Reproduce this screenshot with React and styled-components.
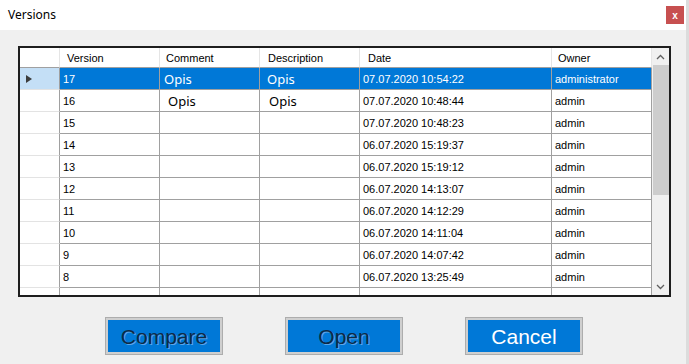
import React from "react"
import styled, { createGlobalStyle, css } from "styled-components"

const GlobalStyle = createGlobalStyle`
    html, body {
        margin: 0;
        padding: 0;
        background: #e6e6e6;
    }
    * {
        box-sizing: border-box;
    }
`

const Window = styled.div`
    width: 689px;
    height: 364px;
    display: flex;
    flex-direction: column;
    background: #f0f0f0;
    border-right: 3px solid #dcdcdc;
    overflow: hidden;
`

const TitleBar = styled.div`
    height: 30px;
    flex: none;
    display: flex;
    align-items: flex-start;
    justify-content: space-between;
    background: #fff;
    padding: 0 2px 0 8px;
`

const Title = styled.span`
    margin-top: 6px;
    font-family: "Noto Sans", "Open Sans", sans-serif;
    font-size: 12px;
    color: #000;
`

const CloseButton = styled.div`
    width: 18px;
    height: 18px;
    margin-top: 6px;
    display: flex;
    align-items: center;
    justify-content: center;
    background: #c75050;
    color: #fff;
    font-family: "Liberation Sans", Arial, sans-serif;
    font-size: 10px;
    font-weight: bold;
`

const Body = styled.div`
    flex: 1;
    display: flex;
    flex-direction: column;
    padding: 16px 0 0 18px;
`

const GridFrame = styled.div`
    width: 653px;
    height: 251px;
    display: flex;
    border: 2px solid #1e1e1e;
    background: #fff;
`

const Viewport = styled.div`
    flex: 1;
    overflow: hidden;
    display: grid;
    grid-template-columns: 40px 100px 100px 100px 192px 100px;
    grid-auto-rows: 22px;
    grid-template-rows: 20px;
    align-content: start;
    font-family: "Liberation Sans", Arial, sans-serif;
    font-size: 11px;
    color: #000;
`

const HeaderCell = styled.div`
    display: flex;
    align-items: center;
    padding-left: ${p => p.$pad || 7}px;
    border-right: 1px solid #e5e5e5;
    border-bottom: 1px solid #a0a0a0;
    background: #fff;
    white-space: nowrap;
`

const RowHeader = styled.div`
    display: flex;
    align-items: center;
    padding-left: 6px;
    border-right: 1px solid #a0a0a0;
    border-bottom: 1px solid #e3e3e3;
    background: ${p => (p.$current ? "#c4dff6" : "#fff")};
`

const Pointer = styled.span`
    width: 0;
    height: 0;
    border-top: 4.5px solid transparent;
    border-bottom: 4.5px solid transparent;
    border-left: 6px solid #3c3c3c;
`

const Cell = styled.div`
    display: flex;
    align-items: center;
    padding-left: ${p => p.$pad || 3}px;
    border-right: 1px solid #a0a0a0;
    border-bottom: 1px solid #a0a0a0;
    white-space: nowrap;
    overflow: hidden;
    ${p =>
        p.$selected &&
        css`
            background: #0078d7;
            color: #fff;
        `}
    ${p =>
        p.$large &&
        css`
            font-family: "Noto Sans", "Open Sans", sans-serif;
            font-size: 13px;
        `}
`

const ScrollBar = styled.div`
    width: 17px;
    flex: none;
    display: flex;
    flex-direction: column;
    background: #f0f0f0;
`

const ArrowBox = styled.div`
    height: 17px;
    flex: none;
    display: flex;
    align-items: center;
    justify-content: center;
`

const Track = styled.div`
    flex: 1;
    padding: 0 0 0 1px;
`

const Thumb = styled.div`
    height: 130px;
    background: #cdcdcd;
`

const ButtonBar = styled.div`
    display: flex;
    gap: 62px;
    margin-top: 20px;
    padding-left: 87px;
`

const DialogButton = styled.button`
    width: 118px;
    height: 38px;
    padding: 0;
    border: 1px solid #adadad;
    box-shadow: inset 0 0 0 2px #cfcfcf;
    background: #0078d7;
    font-family: "Liberation Sans", Arial, sans-serif;
    font-size: 21px;
    line-height: 1;
    cursor: pointer;
    color: ${p => (p.$light ? "#fff" : "#0d2a47")};
    text-shadow: ${p =>
        p.$light ? "none" : "1px 1px 0 rgba(110, 175, 235, 0.85)"};
`

const columns = [
    { title: "Version", pad: 7 },
    { title: "Comment", pad: 6 },
    { title: "Description", pad: 8 },
    { title: "Date", pad: 8 },
    { title: "Owner", pad: 6 },
]

const versions = [
    { version: 17, comment: "Opis", description: "Opis", date: "07.07.2020 10:54:22", owner: "administrator" },
    { version: 16, comment: "Opis", description: "Opis", date: "07.07.2020 10:48:44", owner: "admin" },
    { version: 15, date: "07.07.2020 10:48:23", owner: "admin" },
    { version: 14, date: "06.07.2020 15:19:37", owner: "admin" },
    { version: 13, date: "06.07.2020 15:19:12", owner: "admin" },
    { version: 12, date: "06.07.2020 14:13:07", owner: "admin" },
    { version: 11, date: "06.07.2020 14:12:29", owner: "admin" },
    { version: 10, date: "06.07.2020 14:11:04", owner: "admin" },
    { version: 9, date: "06.07.2020 14:07:42", owner: "admin" },
    { version: 8, date: "06.07.2020 13:25:49", owner: "admin" },
    { version: 7, comment: "asdf", description: "fdsa", date: "06.07.2020 13:08:09", owner: "admin", plain: true },
]

const Chevron = ({ up }) => (
    <svg width="9" height="6" viewBox="0 0 9 6">
        <path
            d={up ? "M1 5 L4.5 1.5 L8 5" : "M1 1 L4.5 4.5 L8 1"}
            fill="none"
            stroke="#606060"
            strokeWidth="1.3"
        />
    </svg>
)

const VersionRow = ({ row, index }) => {
    const selected = index === 0
    const large = !row.plain
    return (
        <>
            <RowHeader $current={selected}>{selected && <Pointer />}</RowHeader>
            <Cell $selected={selected}>{row.version}</Cell>
            <Cell $selected={selected} $large={large && row.comment} $pad={selected ? 4 : row.comment ? 8 : 3}>
                {row.comment}
            </Cell>
            <Cell $selected={selected} $large={large && row.description} $pad={selected ? 7 : row.description ? 9 : 3}>
                {row.description}
            </Cell>
            <Cell $selected={selected}>{row.date}</Cell>
            <Cell $selected={selected}>{row.owner}</Cell>
        </>
    )
}

const App = () => (
    <>
        <GlobalStyle />
        <Window>
            <TitleBar>
                <Title>Versions</Title>
                <CloseButton>x</CloseButton>
            </TitleBar>
            <Body>
                <GridFrame>
                    <Viewport>
                        <HeaderCell />
                        {columns.map(col => (
                            <HeaderCell key={col.title} $pad={col.pad}>
                                {col.title}
                            </HeaderCell>
                        ))}
                        {versions.map((row, i) => (
                            <VersionRow key={row.version} row={row} index={i} />
                        ))}
                    </Viewport>
                    <ScrollBar>
                        <ArrowBox>
                            <Chevron up />
                        </ArrowBox>
                        <Track>
                            <Thumb />
                        </Track>
                        <ArrowBox>
                            <Chevron />
                        </ArrowBox>
                    </ScrollBar>
                </GridFrame>
                <ButtonBar>
                    <DialogButton>Compare</DialogButton>
                    <DialogButton>Open</DialogButton>
                    <DialogButton $light>Cancel</DialogButton>
                </ButtonBar>
            </Body>
        </Window>
    </>
)

export default App
